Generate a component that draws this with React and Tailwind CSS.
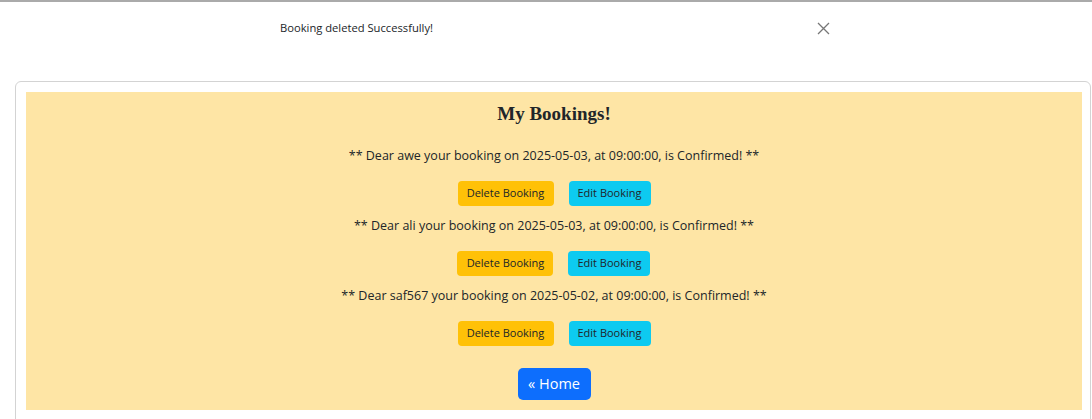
import React from "react";

const bookings = [
  { name: "awe", date: "2025-05-03", time: "09:00:00" },
  { name: "ali", date: "2025-05-03", time: "09:00:00" },
  { name: "saf567", date: "2025-05-02", time: "09:00:00" },
];

const App = () => {
  return (
    <div
      className="min-h-[419px] bg-white text-[#212529] border-t-2 border-[#aaaaaa]"
      style={{ fontFamily: '"Open Sans", "Liberation Sans", sans-serif' }}
    >
      {/* Toast */}
      <div className="flex items-center h-[57px] pl-[280px] pb-[5px]">
        <span className="text-[11.2px] w-[536px]">Booking deleted Successfully!</span>
        <button className="text-[#777] w-[14px] h-[14px] flex items-center justify-center">
          <svg width="13" height="13" viewBox="0 0 13 13" stroke="currentColor" strokeWidth="1.3">
            <path d="M1 1L12 12M12 1L1 12" />
          </svg>
        </button>
      </div>

      {/* Card */}
      <div className="mt-[22px] ml-[15px] w-[1076px] border border-[#d3d3d3] rounded-md pt-[10px] pl-[10px] pr-[8px] pb-[20px]">
        <div className="bg-[#fee5a5] flex flex-col items-center pt-[9px] pb-[10px]">
          <h2
            className="text-[19px] font-bold leading-[26px] mb-[20px]"
            style={{ fontFamily: '"Liberation Serif", "DejaVu Serif", serif' }}
          >
            My Bookings!
          </h2>

          {bookings.map((b) => (
            <div key={b.name} className="flex flex-col items-center">
              <p className="text-[12.5px] leading-[18px] mb-[16px]">
                ** Dear {b.name} your booking on {b.date}, at {b.time}, is Confirmed! **
              </p>
              <div className="flex gap-[15px] mb-[11px]">
                <button className="bg-[#ffc107] rounded-[4px] w-[96px] h-[25px] text-[11px]">
                  Delete Booking
                </button>
                <button className="bg-[#0dcaf0] rounded-[4px] w-[82px] h-[25px] text-[11px]">
                  Edit Booking
                </button>
              </div>
            </div>
          ))}

          <button className="mt-[11px] bg-[#0d6efd] text-white rounded-[5px] w-[73px] h-[32px] text-[14.5px]">
            « Home
          </button>
        </div>
      </div>
    </div>
  );
};

export default App;
